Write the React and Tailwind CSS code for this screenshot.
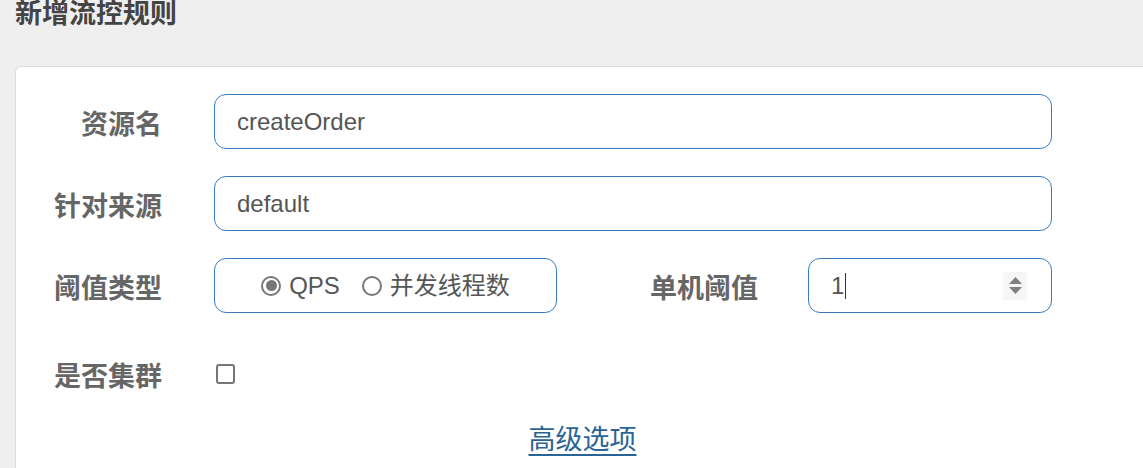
import React from "react";

const cjk = { fontFamily: '"Liberation Sans", "Noto Sans CJK SC", sans-serif' };

function Label({ children, w = "w-[146px]" }) {
  return (
    <div className={`${w} shrink-0 pt-[7px] text-right text-[27px] font-bold text-[#666] leading-none`}>{children}</div>
  );
}

export default function App() {
  return (
    <div className="h-[468px] w-[1143px] overflow-hidden bg-[#efefef]" style={cjk}>
      <div className="pl-[15px] h-[66px] pt-[1px] text-[27px] font-bold text-[#444] leading-[26px]">新增流控规则</div>
      <div className="ml-[15px] h-[402px] rounded-tl-[6px] border-l border-t border-[#dddddd] bg-white pt-[27px]">
        {/* row 1 */}
        <div className="flex items-center h-[55px]">
          <Label>资源名</Label>
          <div className="ml-[52px] w-[838px] h-[55px] rounded-[12px] border border-[#3a7cbd] flex items-center pl-[22px] text-[24px] text-[#555]">
            createOrder
          </div>
        </div>
        {/* row 2 */}
        <div className="flex items-center h-[55px] mt-[27px]">
          <Label>针对来源</Label>
          <div className="ml-[52px] w-[838px] h-[55px] rounded-[12px] border border-[#3a7cbd] flex items-center pl-[22px] text-[24px] text-[#555]">
            default
          </div>
        </div>
        {/* row 3 */}
        <div className="flex items-center h-[55px] mt-[27px]">
          <Label>阈值类型</Label>
          <div className="ml-[52px] w-[343px] h-[55px] rounded-[12px] border border-[#3a7cbd] flex items-center justify-center text-[24px] text-[#555]">
            <span className="flex items-center">
              <span className="w-[20px] h-[20px] rounded-full border-[2px] border-[#777] flex items-center justify-center">
                <span className="w-[11px] h-[11px] rounded-full bg-[#777]" />
              </span>
              <span className="ml-[8px]">QPS</span>
            </span>
            <span className="flex items-center ml-[22px]">
              <span className="w-[20px] h-[20px] rounded-full border-[2px] border-[#777]" />
              <span className="ml-[8px]">并发线程数</span>
            </span>
          </div>
          <Label w="w-[201px]">单机阈值</Label>
          <div className="ml-[50px] w-[244px] h-[55px] rounded-[12px] border border-[#3a7cbd] flex items-center pl-[22px] pr-[24px] text-[24px] text-[#555]">
            <span>1</span>
            <span className="ml-[1px] w-[1px] h-[26px] bg-[#333]" />
            <span className="ml-auto w-[24px] h-[28px] bg-[#f6f6f6] flex flex-col items-center justify-center gap-[3px]">
              <svg width="13" height="7" viewBox="0 0 13 7"><path d="M6.5 0 L13 7 L0 7 Z" fill="#808080" /></svg>
              <svg width="13" height="7" viewBox="0 0 13 7"><path d="M0 0 L13 0 L6.5 7 Z" fill="#808080" /></svg>
            </span>
          </div>
        </div>
        {/* row 4 */}
        <div className="flex items-center h-[55px] mt-[33px]">
          <Label>是否集群</Label>
          <div className="ml-[54px] w-[19px] h-[20px] rounded-[3px] border-[2px] border-[#767676] bg-white" />
        </div>
        {/* link */}
        <div className="mt-[26px] flex justify-center pl-[6px]">
          <span className="text-[27px] text-[#2a6496] underline underline-offset-[5px] leading-none">高级选项</span>
        </div>
      </div>
    </div>
  );
}
